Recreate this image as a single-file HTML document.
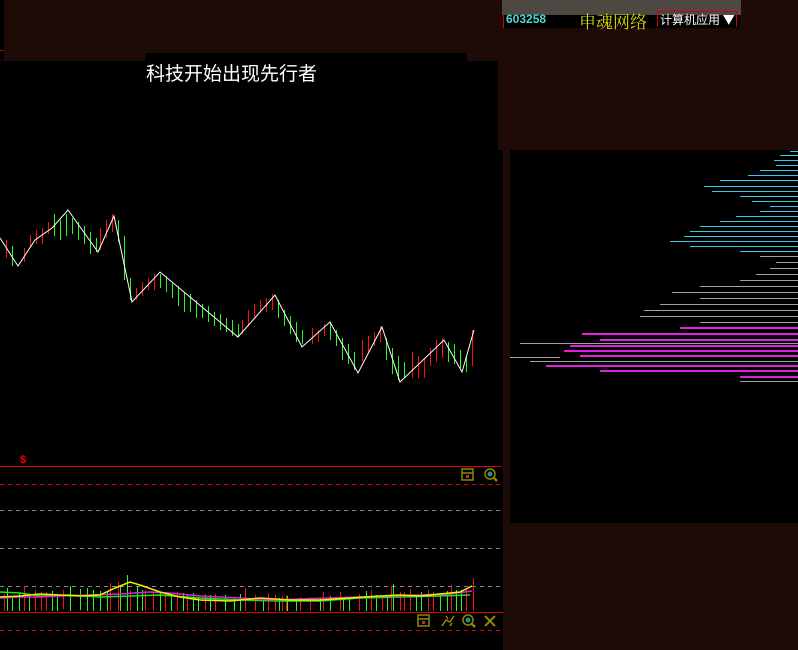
<!DOCTYPE html>
<html><head><meta charset="utf-8"><style>
html,body{margin:0;padding:0;width:798px;height:650px;overflow:hidden;background:#1e0b08;font-family:"Liberation Sans","Noto Sans CJK SC",sans-serif}
.a{position:absolute}
</style></head><body>
<div class="a" style="left:0;top:0;width:4px;height:60px;background:#000"></div>
<div class="a" style="left:0;top:50px;width:4px;height:1px;background:#c00"></div>
<div class="a" style="left:145px;top:53px;width:322px;height:10px;background:#000"></div>
<div class="a" style="left:0;top:61px;width:498px;height:589px;background:#000"></div>
<div class="a" style="left:498px;top:150px;width:5px;height:500px;background:#000"></div>
<div class="a" style="left:146px;top:59px;color:#fff;font-size:19px;font-family:'Noto Sans CJK SC',sans-serif">科技开始出现先行者</div>
<div class="a" style="left:502px;top:0;width:239px;height:15px;background:#4e4843"></div>
<div class="a" style="left:503px;top:15px;width:236px;height:13px;background:#000;border-left:1px solid #d00"></div>
<div class="a" style="left:506px;top:12px;color:#4fd8d8;font-size:12px;font-weight:bold">603258</div>
<div class="a" style="left:579px;top:8px;color:#d8d800;font-size:17px;font-family:'Noto Serif CJK SC',serif">申魂网络</div>
<div class="a" style="left:657px;top:11px;width:80px;height:16px;border:1px solid #c00;border-bottom:none;color:#fff;font-size:12px;line-height:16px;padding-left:2px;box-sizing:border-box;font-family:'Noto Sans CJK SC',sans-serif">计算机应用 ▼</div>
<div class="a" style="left:510px;top:150px;width:288px;height:373px;background:#000"></div>
<svg class="a" style="left:0;top:0" width="798" height="650">
<g stroke="#3ac8e8" stroke-width="1">
<line x1="790" y1="151.5" x2="798" y2="151.5"/><line x1="780" y1="155.5" x2="798" y2="155.5"/><line x1="774" y1="160.5" x2="798" y2="160.5"/><line x1="776" y1="165.5" x2="798" y2="165.5"/><line x1="760" y1="170.5" x2="798" y2="170.5"/><line x1="748" y1="175.5" x2="798" y2="175.5"/><line x1="720" y1="180.5" x2="798" y2="180.5"/><line x1="704" y1="186.5" x2="798" y2="186.5"/><line x1="712" y1="191.5" x2="798" y2="191.5"/><line x1="740" y1="196.5" x2="798" y2="196.5"/><line x1="752" y1="201.5" x2="798" y2="201.5"/><line x1="770" y1="206.5" x2="798" y2="206.5"/><line x1="760" y1="211.5" x2="798" y2="211.5"/><line x1="736" y1="216.5" x2="798" y2="216.5"/><line x1="720" y1="221.5" x2="798" y2="221.5"/><line x1="700" y1="226.5" x2="798" y2="226.5"/><line x1="690" y1="231.5" x2="798" y2="231.5"/><line x1="684" y1="236.5" x2="798" y2="236.5"/><line x1="670" y1="241.5" x2="798" y2="241.5"/><line x1="690" y1="246.5" x2="798" y2="246.5"/><line x1="740" y1="251.5" x2="798" y2="251.5"/>
</g>
<g stroke="#a0a0a0" stroke-width="1">
<line x1="760" y1="256.5" x2="798" y2="256.5"/><line x1="776" y1="262.5" x2="798" y2="262.5"/><line x1="770" y1="268.5" x2="798" y2="268.5"/><line x1="756" y1="274.5" x2="798" y2="274.5"/><line x1="740" y1="280.5" x2="798" y2="280.5"/><line x1="700" y1="286.5" x2="798" y2="286.5"/><line x1="672" y1="292.5" x2="798" y2="292.5"/><line x1="700" y1="298.5" x2="798" y2="298.5"/><line x1="660" y1="304.5" x2="798" y2="304.5"/><line x1="644" y1="310.5" x2="798" y2="310.5"/><line x1="640" y1="316.5" x2="798" y2="316.5"/><line x1="700" y1="322.5" x2="798" y2="322.5"/>
<line x1="510" y1="357.5" x2="560" y2="357.5"/><line x1="520" y1="343.5" x2="798" y2="343.5"/><line x1="530" y1="361.5" x2="798" y2="361.5"/>
</g>
<g stroke="#e020e0" stroke-width="2">
<line x1="680" y1="328" x2="798" y2="328"/><line x1="582" y1="334" x2="798" y2="334"/><line x1="600" y1="340" x2="798" y2="340"/><line x1="570" y1="346" x2="798" y2="346"/><line x1="564" y1="351" x2="798" y2="351"/><line x1="580" y1="356" x2="798" y2="356"/><line x1="546" y1="366" x2="798" y2="366"/><line x1="600" y1="371" x2="798" y2="371"/><line x1="740" y1="377" x2="798" y2="377"/>
</g>
<line x1="740" y1="381.5" x2="798" y2="381.5" stroke="#a0a0a0"/>
<line x1="0" y1="466.5" x2="501" y2="466.5" stroke="#e00000"/>
<line x1="0" y1="484.5" x2="501" y2="484.5" stroke="#e00000" stroke-dasharray="4,4"/>
<line x1="0" y1="510.5" x2="501" y2="510.5" stroke="#888" stroke-dasharray="4,4"/>
<line x1="0" y1="548.5" x2="501" y2="548.5" stroke="#888" stroke-dasharray="4,4"/>
<line x1="0" y1="586.5" x2="501" y2="586.5" stroke="#888" stroke-dasharray="4,4"/>
<line x1="0" y1="612.5" x2="503" y2="612.5" stroke="#e00000"/>
<line x1="0" y1="630.5" x2="503" y2="630.5" stroke="#e00000" stroke-dasharray="4,4"/>
<text x="20" y="463" fill="#e00" font-size="11" font-weight="bold" font-family="Liberation Sans">$</text>
<g transform="translate(0.5,0)">
<g stroke-width="1">
<g stroke="#ff1010">
<path d="M6 240v18M24 248v14M30 235v12M36 230v14M42 228v16M48 222v12M100 228v22M106 220v18M112 214v18M136 288v12M142 282v14M148 278v12M154 274v16M242 320v14M248 310v16M254 304v14M260 300v12M266 298v14M272 294v16M312 328v16M318 330v12M324 324v12M362 340v22M368 336v16M374 332v14M380 326v16M412 352v26M418 356v22M424 358v20M430 348v18M436 340v22M442 338v20M472 330v36"/>
</g>
<g stroke="#20ff20">
<path d="M12 246v20M54 214v22M60 220v20M66 214v22M72 218v16M78 222v18M84 226v18M90 232v22M96 238v14M118 220v22M124 236v44M130 278v22M160 274v14M166 276v16M172 282v16M178 286v20M184 292v20M190 294v18M196 300v18M202 304v14M208 306v16M214 312v14M220 314v16M226 318v14M232 320v16M238 324v12M278 300v18M284 310v16M290 316v18M296 322v20M302 330v14M330 322v18M336 330v16M342 338v22M348 344v20M354 352v18M386 338v22M392 348v26M398 356v24M404 362v16M448 342v20M454 344v20M460 350v18M466 356v16"/>
</g>
</g>
<g stroke-width="1">
<g stroke="#ff1010"><path d="M4 594v17M24 586v25M35 590v21M41 592v19M46 592v19M63 590v19M110 583v28M118 582v29M130 590v21M145 590v21M153 592v19M165 592v19M177 592v19M187 595v16M205 594v16M215 594v17M245 588v23M255 595v16M268 593v18M275 595v16M282 596v15M286 595v16M300 597v14M310 597v14M323 592v19M340 592v19M359 594v17M371 590v21M382 596v15M391 586v25M400 592v19M404 592v19M410 589v22M428 590v21M433 592v19M451 585v26M466 588v23M473 578v33"/></g>
<g stroke="#20ff20"><path d="M7 588v23M12 598v13M19 593v18M29 594v17M52 591v20M57 595v16M70 586v25M80 589v21M87 588v23M93 590v21M100 591v20M107 592v19M120 586v25M127 575v36M137 586v25M142 590v21M160 592v19M171 594v17M183 593v18M193 593v18M198 597v14M210 595v16M225 595v16M234 597v14M240 594v17M263 598v13M279 598v13M287 596v15M296 599v12M320 598v13M330 596v15M343 597v14M349 597v14M366 591v20M376 595v16M387 595v16M393 584v27M416 597v14M421 592v19M440 594v17M447 591v20M456 590v21M461 590v21"/></g>
</g>
</g>
<polyline fill="none" stroke="#fff" stroke-width="1" points="0,238 18,266 35,240 52,228 68,210 98,252 114,216 132,302 160,272 238,337 275,295 302,347 330,322 358,373 382,327 400,382 444,340 462,372 474,330"/>
<polyline fill="none" stroke="#20e020" stroke-width="1.5" points="0,592 20,593 40,596 70,595 100,597 130,596 160,595 200,598 240,600 280,601 320,601 360,598 400,597 440,596 470,595"/>
<polyline fill="none" stroke="#e020e0" stroke-width="1.5" points="0,598 20,597 40,597 60,596 90,595 120,594 150,592 170,593 200,596 240,598 270,600 300,599 330,598 360,597 390,596 420,595 450,594 472,591"/>
<polyline fill="none" stroke="#f0f000" stroke-width="1.5" points="0,597 20,596 40,594 60,595 80,596 100,595 115,588 130,582 140,585 160,592 180,597 200,600 230,601 260,598 290,600 320,600 350,598 380,596 400,595 420,596 440,594 460,592 472,586"/>
<g fill="none" stroke="#8a8a00" stroke-width="1.5">
<rect x="462" y="469" width="11" height="11"/><line x1="462" y1="473" x2="473" y2="473"/>
<circle cx="490" cy="474" r="5"/><line x1="494" y1="478" x2="497" y2="481" stroke-width="2.5"/>
<rect x="418" y="615" width="11" height="11"/><line x1="418" y1="619" x2="429" y2="619"/>
<path d="M442 626l4-6 4 2 4-6M446 616l2 3M450 626l2-3"/>
<circle cx="468" cy="620" r="5"/><line x1="472" y1="624" x2="475" y2="627" stroke-width="2.5"/>
<path d="M485 616l10 10M495 616l-10 10" stroke-width="2"/>
</g>
<rect x="466" y="475" width="3" height="3" fill="#c03030"/><rect x="422" y="621" width="3" height="3" fill="#c03030"/>
<circle cx="490" cy="474" r="2.5" fill="#2a8a8a"/><circle cx="468" cy="620" r="2.5" fill="#2a8a8a"/>
</svg>
</body></html>
